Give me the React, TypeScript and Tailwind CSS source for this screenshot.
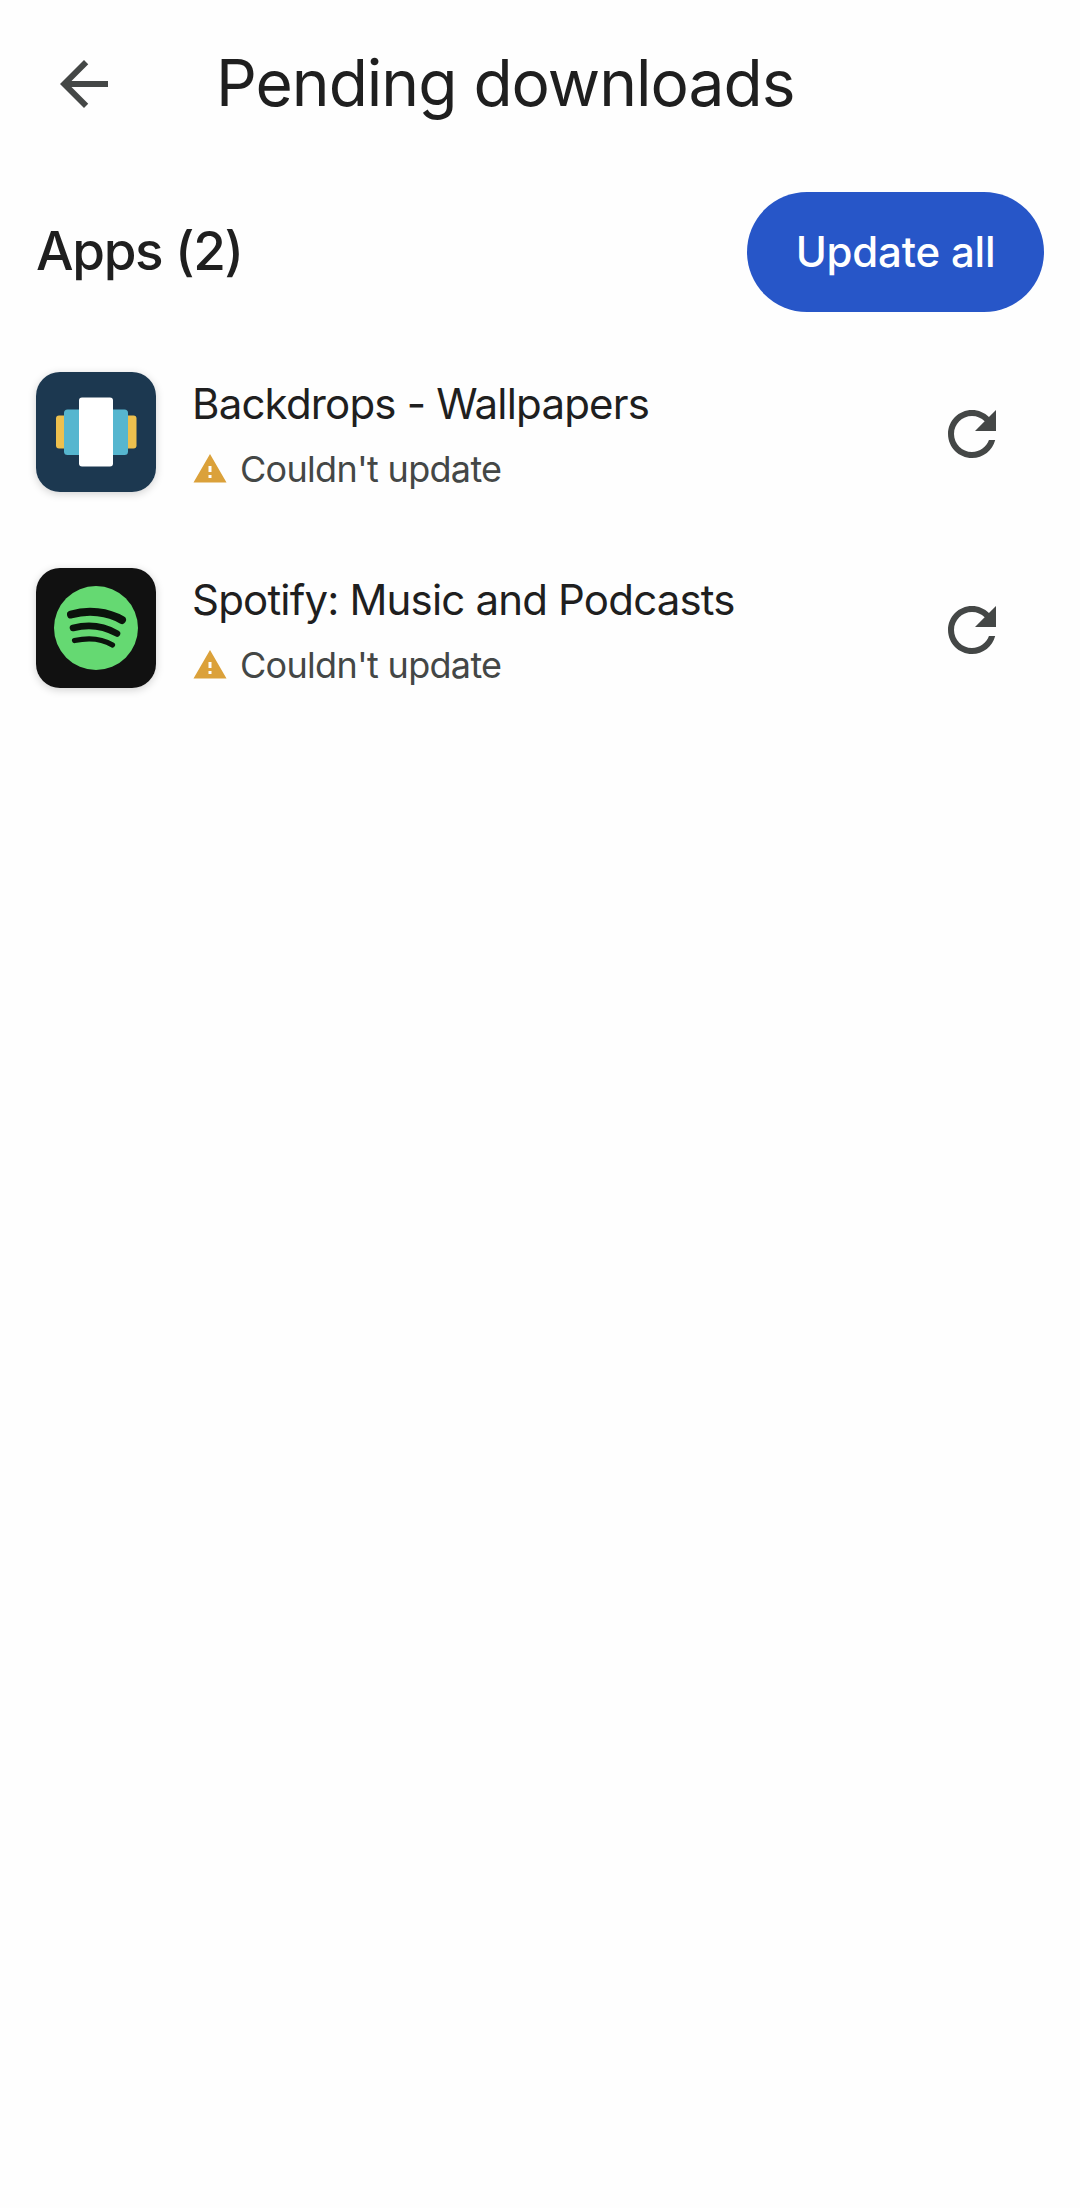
import type { ReactNode } from 'react'

type PendingApp = {
  id: string
  name: string
  icon: ReactNode
}

function BackIcon() {
  return (
    <svg viewBox="0 0 24 24" className="size-18 fill-[#444746]">
      <path d="M20 11H7.83l5.59-5.59L12 4l-8 8 8 8 1.41-1.41L7.83 13H20v-2z" />
    </svg>
  )
}

function RefreshIcon() {
  return (
    <svg viewBox="0 0 24 24" className="size-18 fill-[#444746]">
      <path d="M17.65 6.35C16.2 4.9 14.21 4 12 4c-4.42 0-7.99 3.58-7.99 8s3.57 8 7.99 8c3.73 0 6.84-2.55 7.73-6h-2.08c-.82 2.33-3.04 4-5.65 4-3.31 0-6-2.69-6-6s2.69-6 6-6c1.66 0 3.14.69 4.22 1.78L13 11h7V4l-2.35 2.35z" />
    </svg>
  )
}

function WarningIcon() {
  return (
    <svg viewBox="0 0 24 24" className="size-9 shrink-0 fill-[#dba13a]">
      <path d="M1 21h22L12 2 1 21zm12-3h-2v-2h2v2zm0-4h-2v-4h2v4z" />
    </svg>
  )
}

function BackdropsLogo() {
  return (
    <svg viewBox="0 0 120 120" className="size-full">
      <rect width="120" height="120" fill="#1c3850" />
      <rect x="20" y="43.5" width="80.5" height="33" rx="3" fill="#edc04e" />
      <rect x="28" y="37.5" width="64" height="45.5" rx="3.5" fill="#56b6cf" />
      <rect x="43" y="25.5" width="34" height="69" rx="3" fill="#fff" />
    </svg>
  )
}

function SpotifyLogo() {
  return (
    <svg viewBox="0 0 120 120" className="size-full">
      <rect width="120" height="120" fill="#111" />
      <circle cx="60" cy="60" r="42" fill="#65d972" />
      <g fill="none" stroke="#0b130c" strokeLinecap="round">
        <path d="M35 46.5C52 41.5 72 43.5 86 52" strokeWidth="8" />
        <path d="M37 60C52 56 67 57.5 81 65.5" strokeWidth="6.6" />
        <path d="M38.5 72.5C52 69.5 65 70 76.5 77" strokeWidth="5.2" />
      </g>
    </svg>
  )
}

const apps: PendingApp[] = [
  { id: 'backdrops', name: 'Backdrops - Wallpapers', icon: <BackdropsLogo /> },
  { id: 'spotify', name: 'Spotify: Music and Podcasts', icon: <SpotifyLogo /> },
]

function AppRow({ app }: { app: PendingApp }) {
  return (
    <li className="flex h-30 items-center">
      <div className="size-30 shrink-0 overflow-hidden rounded-3xl shadow-[0_2px_8px_rgba(0,0,0,0.18)]">
        {app.icon}
      </div>
      <div className="ml-9 flex h-full flex-1 flex-col pt-0.5">
        <p className="text-[42px] leading-[60px] tracking-[-0.82px] whitespace-nowrap">{app.name}</p>
        <div className="mt-[11px] flex h-12 items-center gap-3 text-[36px] leading-[48px] tracking-[-0.7px] text-[#444746]">
          <WarningIcon />
          <span className="whitespace-nowrap">Couldn't update</span>
        </div>
      </div>
      <button type="button" className="mt-1 mr-9">
        <RefreshIcon />
      </button>
    </li>
  )
}

export default function App() {
  return (
    <main className="min-h-[2208px] w-[1080px] bg-[#fefefe] font-['Inter',sans-serif] text-[#1f1f1f]">
      <header className="flex h-42 items-center pl-12">
        <button type="button">
          <BackIcon />
        </button>
        <h1 className="ml-24 pb-0.5 text-[64px] leading-none tracking-[-1px] whitespace-nowrap">
          Pending downloads
        </h1>
      </header>

      <section className="px-9 pt-6">
        <div className="flex h-30 items-center justify-between">
          <h2 className="pb-px text-[53px] leading-none font-medium tracking-[-1.35px]">Apps (2)</h2>
          <button
            type="button"
            className="h-30 w-[297px] rounded-full bg-[#2756c8] pb-0.5 text-[42px] font-medium tracking-[-0.2px] text-white"
          >
            Update all
          </button>
        </div>

        <ul className="mt-15 flex flex-col gap-19">
          {apps.map((app) => (
            <AppRow key={app.id} app={app} />
          ))}
        </ul>
      </section>
    </main>
  )
}
